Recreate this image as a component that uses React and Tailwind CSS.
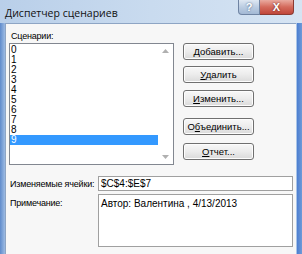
import React from "react";

const font = { fontFamily: '"Liberation Sans", Arial, sans-serif' };

function Btn({ pre = "", u, post }) {
  return (
    <div className="h-[17px] w-[71px] flex items-center justify-center rounded-[3px] border border-[#707070] bg-gradient-to-b from-[#f8f8f8] via-[#ececec] to-[#dadada] text-[9.5px] leading-none text-black shadow-[inset_0_0_0_1px_#fdfdfd]">
      <span>
        {pre}
        <span className="underline underline-offset-1">{u}</span>
        {post}
      </span>
    </div>
  );
}

export default function App() {
  const items = ["0", "1", "2", "3", "4", "5", "6", "7", "8", "9"];
  return (
    <div className="w-[302px] h-[254px] overflow-hidden flex flex-col bg-[#c4d8ee]" style={font}>
      {/* title bar */}
      <div className="h-[23px] flex items-start justify-between bg-gradient-to-r from-[#b9cfe9] via-[#c9dbef] to-[#d6e4f3]">
        <div
          className="pl-[5px] pt-[6px] text-[10.5px] leading-[14px] text-[#111]"
          style={{ fontFamily: '"Open Sans", "Noto Sans", sans-serif' }}
        >
          Диспетчер сценариев
        </div>
        <div className="flex mr-[8px]">
          <div className="w-[22px] h-[15px] rounded-bl-[4px] border border-t-0 border-[#6f84a3] bg-gradient-to-b from-[#dfe8f3] via-[#bccde2] to-[#a3b9d5] flex items-center justify-center text-white text-[11px] font-bold leading-none [text-shadow:0_0_2px_#3b5578]">
            ?
          </div>
          <div className="w-[34px] h-[15px] rounded-br-[4px] border border-t-0 border-l-0 border-[#8b3a32] bg-gradient-to-b from-[#e9aaa0] via-[#d46a5c] to-[#c0463a] flex items-center justify-center text-white text-[11px] font-bold leading-none [text-shadow:0_0_2px_#5a1a14]">
            X
          </div>
        </div>
      </div>
      {/* body with frame */}
      <div className="flex flex-1">
        <div className="w-[5px] bg-gradient-to-r from-[#5f8bcb] to-[#9dbbe3]" />
        <div className="flex-1 bg-[#f7f7f7] border-t border-l border-[#8ea5c4] flex flex-col text-[9px] tracking-[-0.2px] leading-[12px] text-black">
          <div className="flex pt-[6px]">
            <div className="ml-[3px] flex flex-col w-[165px]">
              <div className="pl-[2px] h-[13px]">Сценарии:</div>
              <div className="h-[122px] border border-[#828790] bg-white flex">
                <div className="flex-1 flex flex-col pt-[1px] tracking-normal">
                  {items.map((it) => (
                    <div
                      key={it}
                      className={
                        "h-[10px] leading-[10px] pl-[1px] text-[10px] " +
                        (it === "9" ? "bg-[#3399ff] text-white" : "")
                      }
                    >
                      {it}
                    </div>
                  ))}
                </div>
                <div className="w-[15px] flex flex-col items-center justify-between py-[5px]">
                  <svg width="7" height="4" viewBox="0 0 7 4">
                    <path d="M0 4 L3.5 0 L7 4 Z" fill="#b0b0b0" />
                  </svg>
                  <svg width="7" height="4" viewBox="0 0 7 4">
                    <path d="M0 0 L3.5 4 L7 0 Z" fill="#b0b0b0" />
                  </svg>
                </div>
              </div>
            </div>
            <div className="ml-[9px] pt-[13px] flex flex-col tracking-normal">
              <Btn u="Д" post="обавить..." />
              <div className="mt-[6px]">
                <Btn u="У" post="далить" />
              </div>
              <div className="mt-[7px]">
                <Btn u="И" post="зменить..." />
              </div>
              <div className="mt-[11px]">
                <Btn pre="О" u="б" post="ъединить..." />
              </div>
              <div className="mt-[8px]">
                <Btn u="О" post="тчет..." />
              </div>
            </div>
          </div>
          <div className="flex items-center mt-[11px]">
            <div className="w-[92px] shrink-0 pl-[4px] whitespace-nowrap">Изменяемые ячейки:</div>
            <div className="w-[195px] shrink-0 h-[15px] border border-[#a0a0a0] bg-white pl-[2px] flex items-center text-[10px] tracking-normal">
              $C$4:$E$7
            </div>
          </div>
          <div className="flex mt-[3px]">
            <div className="w-[92px] shrink-0 pl-[4px] pt-[3px]">Примечание:</div>
            <div className="w-[195px] shrink-0 h-[53px] border border-[#a0a0a0] bg-white pl-[2px] pt-[3px] text-[10px] tracking-normal">
              Автор: Валентина , 4/13/2013
            </div>
          </div>
        </div>
        <div className="w-[6px] flex">
          <div className="w-[1px] bg-[#a8c4e8]" />
          <div className="flex-1 bg-gradient-to-r from-[#4c7ed0] to-[#6f9ad8]" />
        </div>
      </div>
    </div>
  );
}
